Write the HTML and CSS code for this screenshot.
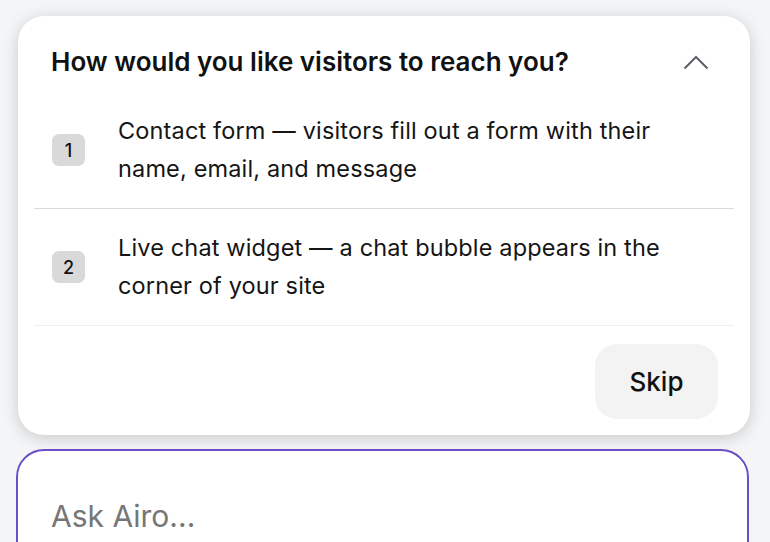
FILE: index.html
```html
<!DOCTYPE html>
<html lang="en">
<head>
<meta charset="utf-8">
<title>Airo</title>
<link rel="stylesheet" href="styles.css">
</head>
<body>
<div class="page">
  <section class="card">
    <header class="card-head">
      <h2 class="title">How would you like visitors to reach you?</h2>
      <svg class="chevron" width="26" height="15" viewBox="0 0 26 15" aria-hidden="true">
        <path d="M1.5 13.5 L13 2 L24.5 13.5" fill="none" stroke="#5f6067" stroke-width="2"/>
      </svg>
    </header>
    <ol class="options">
      <li class="option option-first">
        <span class="badge">1</span>
        <span class="option-text">Contact form — visitors fill out a form with their name, email, and message</span>
      </li>
      <li class="option">
        <span class="badge">2</span>
        <span class="option-text">Live chat widget — a chat bubble appears in the corner of your site</span>
      </li>
    </ol>
    <div class="card-foot">
      <button class="skip" type="button">Skip</button>
    </div>
  </section>
  <div class="ask">
    <div class="ask-placeholder">Ask Airo...</div>
  </div>
</div>
</body>
</html>
```
FILE: styles.css
```css
* { box-sizing: border-box; }
html, body { margin: 0; padding: 0; }
body {
  background: #f4f5f6;
  font-family: "Inter", "Noto Sans", sans-serif;
  color: #111111;
  height: 542px;
  overflow: hidden;
}
.page {
  padding: 16px 20px 0 18px;
}
.card {
  background: #ffffff;
  border-radius: 26px;
  box-shadow: 0 3px 16px rgba(0, 0, 0, 0.18);
  width: 732px;
}
.card-head {
  display: flex;
  align-items: center;
  justify-content: space-between;
  padding: 28px 41px 12px 33px;
}
.title {
  margin: 0;
  font-size: 26px;
  line-height: 36px;
  font-weight: 600;
  color: #111111;
}
.chevron { display: block; }
.options {
  list-style: none;
  margin: 0 16px;
  padding: 0;
}
.option {
  display: flex;
  align-items: center;
  gap: 33px;
  padding: 20px 18px;
  border-bottom: 1px solid #f0f0f0;
}
.option-first { border-bottom-color: #d8dbde; }
.badge {
  flex: none;
  width: 33px;
  height: 32px;
  border-radius: 7px;
  background: #d9d9d9;
  display: flex;
  align-items: center;
  justify-content: center;
  font-size: 18px;
  font-weight: 500;
  color: #111111;
}
.option-text {
  font-size: 23.5px;
  line-height: 38px;
  letter-spacing: 0.15px;
  color: #151515;
  max-width: 590px;
}
.card-foot {
  display: flex;
  justify-content: flex-end;
  padding: 18px 32px 16px 0;
}
.skip {
  width: 123px;
  height: 75px;
  border: 0;
  border-radius: 22px;
  background: #f3f3f3;
  font-family: inherit;
  font-size: 26px;
  font-weight: 500;
  color: #111111;
}
.ask {
  margin: 14px 1px 0 -2px;
  height: 140px;
  background: #ffffff;
  border: 2px solid #6b4fc8;
  border-radius: 28px;
  padding: 45px 33px 0;
}
.ask-placeholder {
  font-size: 30px;
  line-height: 40px;
  color: #767676;
}
```
